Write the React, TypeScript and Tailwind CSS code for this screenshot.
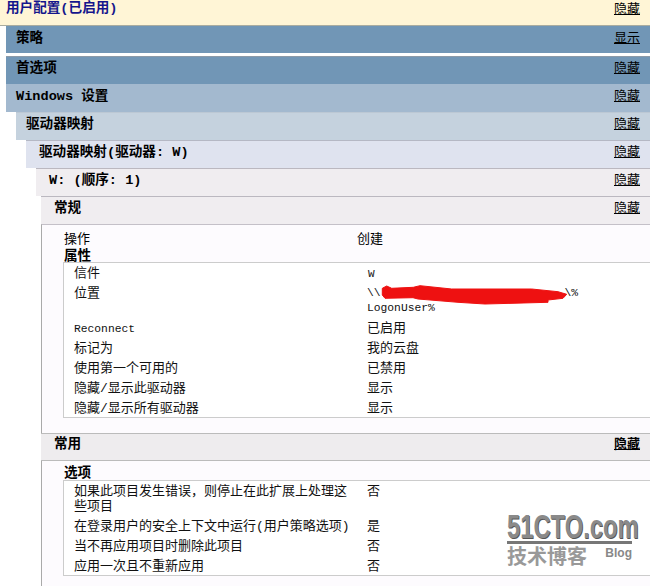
const stack = "font-['Liberation_Mono','Noto_Sans_CJK_SC',monospace]";

function Bar({ title, link = "隐藏", className }: { title: string; link?: string; className: string }) {
  return (
    <div className={`flex justify-between pr-[10px] pt-[3px] border-t ${className}`}>
      <span className="font-bold text-[13.6px] leading-[18px] whitespace-pre">{title}</span>
      <a className="text-[13px] leading-[18px] underline text-black">{link}</a>
    </div>
  );
}

function Row({ label, value, className = "h-5" }: { label: React.ReactNode; value: React.ReactNode; className?: string }) {
  return (
    <div className={`flex text-[13px] leading-[15px] text-[#111] ${className}`}>
      <div className="w-[303px] pl-[10px] pr-[15px] pt-[3px]">{label}</div>
      <div className="flex-1 pt-[3px]">{value}</div>
    </div>
  );
}

export default function App() {
  return (
    <div className={`relative w-[650px] h-[586px] overflow-hidden bg-white text-black ${stack}`}>
      <div className="h-[26px] flex justify-between pr-[10px] pl-[6px] pt-[1px] bg-[#fff5d6] border-b border-b-[#a9aca0]">
        <span className="font-bold text-[13.6px] leading-[16px] text-[#15158c]">用户配置(已启用)</span>
        <a className="text-[13px] leading-[18px] underline text-black">隐藏</a>
      </div>

      <Bar title="策略" link="显示" className="ml-[6px] h-[27px] pl-[10px] bg-[#7196b6] border-t-[#7196b6]" />
      <div className="h-[3px] bg-white" />
      <Bar title="首选项" className="ml-[6px] h-[28px] pl-[10px] bg-[#7196b6] border-t-[#8c9aa8]" />
      <Bar title="Windows 设置" className="ml-[6px] h-[28px] pl-[10px] bg-[#a3b9cf] border-t-[#a3b9cf]" />
      <Bar title="驱动器映射" className="ml-[16px] h-[28px] pl-[10px] bg-[#c5d2de] border-t-[#bcc8d4]" />
      <Bar title="驱动器映射(驱动器: W)" className="ml-[26px] h-[28px] pl-[13px] bg-[#dfe3ef] border-t-[#b5b8c4]" />
      <Bar title="W: (顺序: 1)" className="ml-[36px] h-[28px] pl-[13px] bg-[#f0edf0] border-t-[#bbb8c0]" />
      <Bar title="常规" className="ml-[41px] h-[28px] pl-[13px] bg-[#f0edf0] border-t-[#bbb8c0]" />

      <div className="ml-[41px] border-l border-l-[#aaaaaa] border-t border-t-[#c4c0c8]">
        <div className="h-[208px] bg-[#fdfbfe] pl-[21px] pt-[7px]">
          <div className="flex text-[13px] leading-[15px] h-[15px]">
            <div className="w-[294px] pl-[1px]">操作</div>
            <div>创建</div>
          </div>
          <div className="font-bold text-[13.6px] leading-[15px] h-[15px] pt-[2px] pl-[1px]">属性</div>
          <div className="bg-white border border-[#cccccc] border-r-0 h-[156px]">
            <Row label="信件" value={<span className="pl-[1px] text-[11px]">W</span>} />
            <Row
              className="h-[35px]"
              label="位置"
              value={
                <div className="w-[211px] text-[11.3px]">
                  <div className="flex justify-between">
                    <span>{"\\\\"}</span>
                    <span>{"\\%"}</span>
                  </div>
                  <div>LogonUser%</div>
                </div>
              }
            />
            <Row label={<span className="text-[11.3px]">Reconnect</span>} value="已启用" />
            <Row label="标记为" value="我的云盘" />
            <Row label="使用第一个可用的" value="已禁用" />
            <Row label="隐藏/显示此驱动器" value="显示" />
            <Row label="隐藏/显示所有驱动器" value="显示" />
          </div>
        </div>

        <div className="flex justify-between h-[28px] pl-[13px] pr-[10px] pt-[2px] bg-[#eeecee] border-t border-b border-[#bbbbbb] -ml-px">
          <span className="font-bold text-[13.6px] leading-[18px]">常用</span>
          <a className="text-[13px] leading-[18px] underline text-black font-bold">隐藏</a>
        </div>

        <div className="h-[125px] bg-[#fdfbfe] pl-[21px] pt-[3px]">
          <div className="font-bold text-[13.6px] leading-[15px] h-[16px] pt-[2px] pl-[1px]">选项</div>
          <div className="bg-white border border-[#cccccc] border-r-0 h-[96px]">
            <Row className="h-[35px]" label={"如果此项目发生错误\uFF0C则停止在此扩展上处理这些项目"} value="否" />
            <Row label="在登录用户的安全上下文中运行(用户策略选项)" value="是" />
            <Row label="当不再应用项目时删除此项目" value="否" />
            <Row label="应用一次且不重新应用" value="否" />
          </div>
        </div>
      </div>

      <svg className="absolute left-[380px] top-[283px]" width="190" height="24" viewBox="0 0 190 24">
        <path d="M2.3 5.3 L6.7 3 L11.7 5.3 L33.3 4.3 L40 2.7 L71.7 6 L151.7 6 L178 8.7 L186.7 11.3 L183 15.3 L168 17 L168 19.3 L105 21 L78 19.3 L38 16 L33 14.7 L5 15.3 L2.3 12 Z" fill="#ee1111" stroke="#ee1111" strokeLinejoin="round" />
      </svg>

      <div className="absolute left-[507px] top-[512px] w-[125px] text-[#8a8a8a] font-['Liberation_Sans',sans-serif]">
        <div className="font-bold text-[33px] leading-[29px] h-[29px] origin-left scale-x-[0.72] [text-shadow:1px_1px_0_#555] whitespace-nowrap">51CTO.com</div>
        <div className="h-[3px] bg-[#777777]" />
        <div className="flex justify-between items-start">
          <span className="font-['Liberation_Sans','Noto_Sans_CJK_SC',sans-serif] font-bold text-[20px] leading-[26px] text-[#999999]">技术博客</span>
          <span className="font-bold text-[12px] leading-[16px] text-[#888888] pt-[1px]">Blog</span>
        </div>
      </div>
    </div>
  );
}
